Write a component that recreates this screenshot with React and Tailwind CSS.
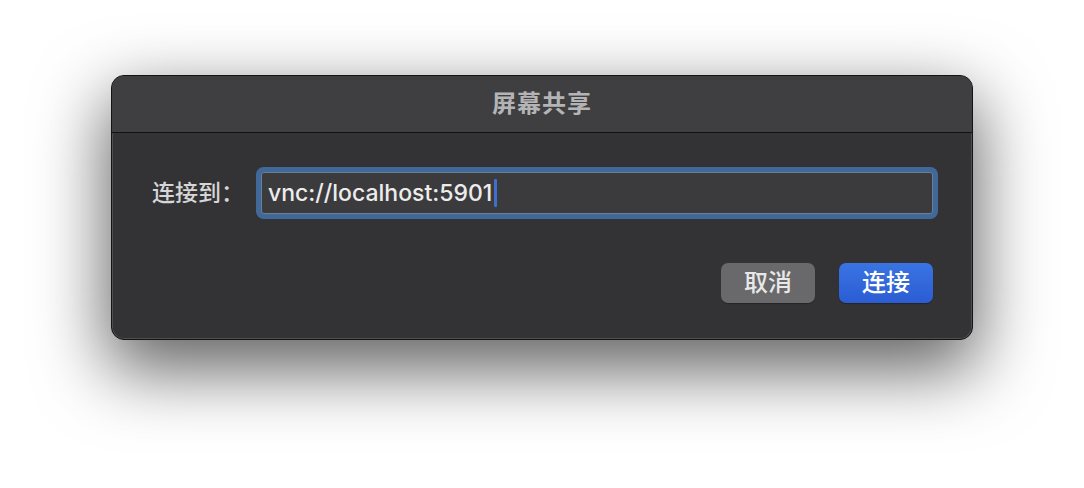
import React from "react";

// macOS style "Screen Sharing" connect dialog
const App = () => {
  return (
    <div
      className="w-[1084px] h-[488px] bg-white pt-[75px] overflow-hidden"
      style={{ fontFamily: 'Inter, "Noto Sans CJK SC", sans-serif' }}
    >
      <div className="mx-auto w-[862px] rounded-[13px] border border-[#141414] bg-[#333336] shadow-[0_26px_70px_4px_rgba(0,0,0,0.62),inset_0_0_0_1px_rgba(255,255,255,0.14)] overflow-hidden">
        {/* title bar */}
        <div className="h-[57px] bg-[#3f3f41] border-b border-[#111] flex items-center justify-center">
          <span className="text-[24px] font-bold text-[#b4b4b6] tracking-[1px]">屏幕共享</span>
        </div>

        {/* body */}
        <div className="px-[39px] pt-[39px] pb-[36px]">
          <div className="flex items-center">
            <span className="text-[23px] font-medium text-[#d6d6d6] w-[110px] shrink-0 pl-[1px]">连接到：</span>
            <div className="flex-1 h-[42px] rounded-[3px] border border-[#6b7f96] bg-[#3b3b3d] ring-[5px] ring-[#40699a] flex items-center pl-[6px]">
              <span className="text-[23px] font-medium text-[#ececec]">vnc://localhost:5901</span>
              <span className="ml-[2px] w-[3px] h-[28px] bg-[#3d6fd1] rounded-[1px]"></span>
            </div>
          </div>

          <div className="flex justify-end gap-[24px] mt-[49px]">
            <button className="w-[94px] h-[40px] rounded-[7px] bg-[#69696b] text-[24px] font-medium text-[#e8e8e8] shadow-[0_1px_1px_rgba(0,0,0,0.3)]">
              取消
            </button>
            <button className="w-[94px] h-[40px] rounded-[7px] bg-gradient-to-b from-[#3a74e3] to-[#2b5cd3] text-[24px] font-medium text-white shadow-[0_1px_1px_rgba(0,0,0,0.3)]">
              连接
            </button>
          </div>
        </div>
      </div>
    </div>
  );
};

export default App;
